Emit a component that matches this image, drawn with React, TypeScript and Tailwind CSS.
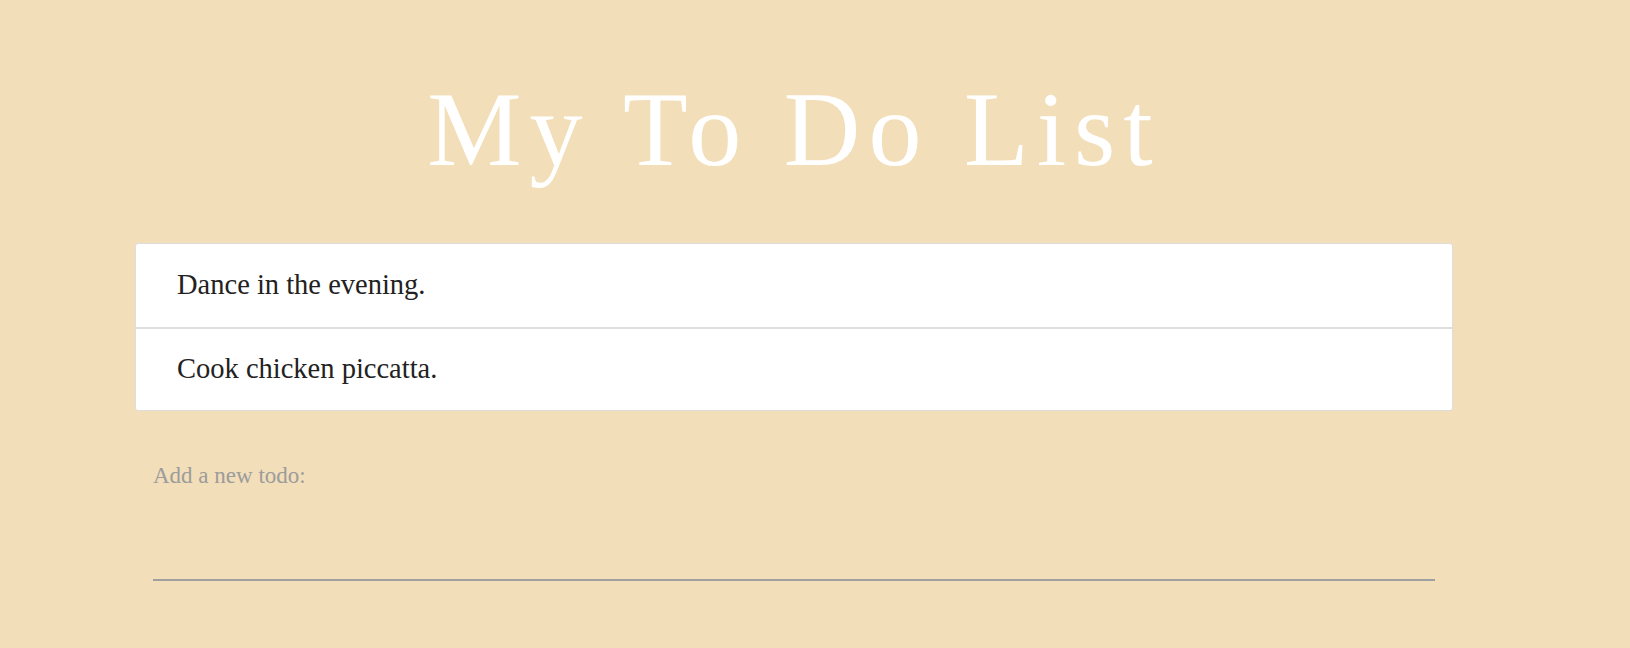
import React, { useState } from "react";

export default function App() {
  const [todos] = useState(["Dance in the evening.", "Cook chicken piccatta."]);
  const [value, setValue] = useState("");
  return (
    <div
      className="min-h-[648px] w-full bg-[#f2deb9]"
      style={{ fontFamily: '"Liberation Serif", "Times New Roman", serif' }}
    >
      <div className="ml-[135px] w-[1318px] pt-[77px]">
        <h1 className="text-center text-[106px] leading-[106px] font-normal tracking-[8px] text-white">
          My To Do List
        </h1>
        <ul className="mt-[60px] overflow-hidden rounded-[3px] border border-[#dddddd] bg-white">
          {todos.map((t, i) => (
            <li
              key={i}
              className={
                "flex h-[83px] items-center pl-[41px] text-[28.5px] text-[#222222] " +
                (i > 0 ? "border-t-2 border-[#dedede]" : "")
              }
            >
              {t}
            </li>
          ))}
        </ul>
        <div className="mx-[18px] mt-[51px]">
          <label className="block text-[23px] leading-[28px] text-[#9c9c9c]">
            Add a new todo:
          </label>
          <input
            value={value}
            onChange={(e) => setValue(e.target.value)}
            className="mt-[10px] block h-[81px] w-full border-b-2 border-[#a0a0a0] bg-transparent text-[24px] text-[#222222] outline-none"
          />
        </div>
      </div>
    </div>
  );
}
